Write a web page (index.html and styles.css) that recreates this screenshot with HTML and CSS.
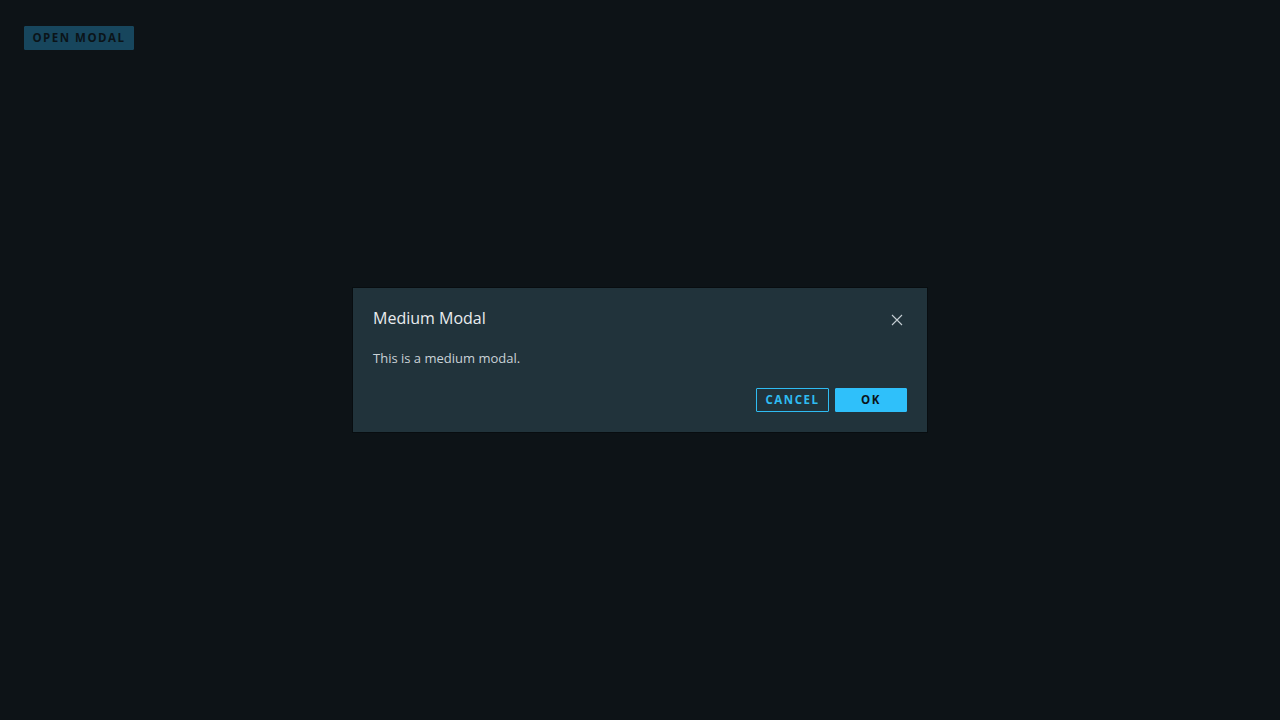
FILE: index.html
```html
<!DOCTYPE html>
<html>
<head>
<meta charset="utf-8">
<link rel="stylesheet" href="styles.css">
</head>
<body>
<div class="page">
  <button class="btn btn-open">OPEN MODAL</button>
</div>
<div class="backdrop">
  <div class="modal">
    <div class="modal-header">
      <h3 class="modal-title">Medium Modal</h3>
      <button class="close" aria-label="Close">
        <svg width="12" height="12" viewBox="0 0 12 12"><path d="M1 1L11 11M11 1L1 11" stroke="#c5ced3" stroke-width="1.1" fill="none"/></svg>
      </button>
    </div>
    <div class="modal-body">This is a medium modal.</div>
    <div class="modal-footer">
      <button class="btn btn-outline">CANCEL</button>
      <button class="btn btn-primary">OK</button>
    </div>
  </div>
</div>
</body>
</html>
```
FILE: styles.css
```css
html, body {
  margin: 0;
  padding: 0;
  background: #0d1317;
  font-family: "Open Sans", Lato, sans-serif;
  height: 100%;
}
.page {
  padding: 26px 24px;
  display: flex;
  align-items: flex-start;
}
.btn {
  font-family: "Open Sans", Lato, sans-serif;
  font-weight: 700;
  font-size: 11.5px;
  letter-spacing: 1.5px;
  line-height: 22px;
  height: 24px;
  padding: 0;
  border-radius: 1px;
  cursor: pointer;
  box-sizing: border-box;
  display: flex;
  align-items: center;
  justify-content: center;
}
.btn-open {
  background: #17465d;
  border: 1px solid #17465d;
  color: #0b1419;
  width: 110px;
}
.backdrop {
  position: fixed;
  inset: 0;
  display: flex;
  align-items: center;
  justify-content: center;
}
.modal {
  width: 576px;
  height: 146px;
  box-sizing: border-box;
  background: #21333b;
  border: 1px solid #080d10;
  padding: 18px 20px 20px 20px;
  display: flex;
  flex-direction: column;
}
.modal-header {
  display: flex;
  align-items: flex-start;
  justify-content: space-between;
  height: 24px;
}
.modal-title {
  margin: 0;
  font-weight: 400;
  font-size: 16px;
  line-height: 24px;
  color: #e9ecef;
}
.close {
  background: none;
  border: none;
  padding: 0;
  width: 12px;
  height: 12px;
  margin-top: 8px;
  margin-right: 4px;
  display: flex;
}
.modal-body {
  margin-top: 18px;
  font-size: 13px;
  line-height: 20px;
  color: #c9d2d7;
}
.modal-footer {
  margin-top: 20px;
  display: flex;
  justify-content: flex-end;
  gap: 6px;
}
.btn-outline {
  background: transparent;
  border: 1px solid #2fbcf2;
  color: #2fbcf2;
  width: 73px;
}
.btn-primary {
  background: #2fc0fa;
  border: 1px solid #2fc0fa;
  color: #0b1419;
  width: 72px;
}
```
